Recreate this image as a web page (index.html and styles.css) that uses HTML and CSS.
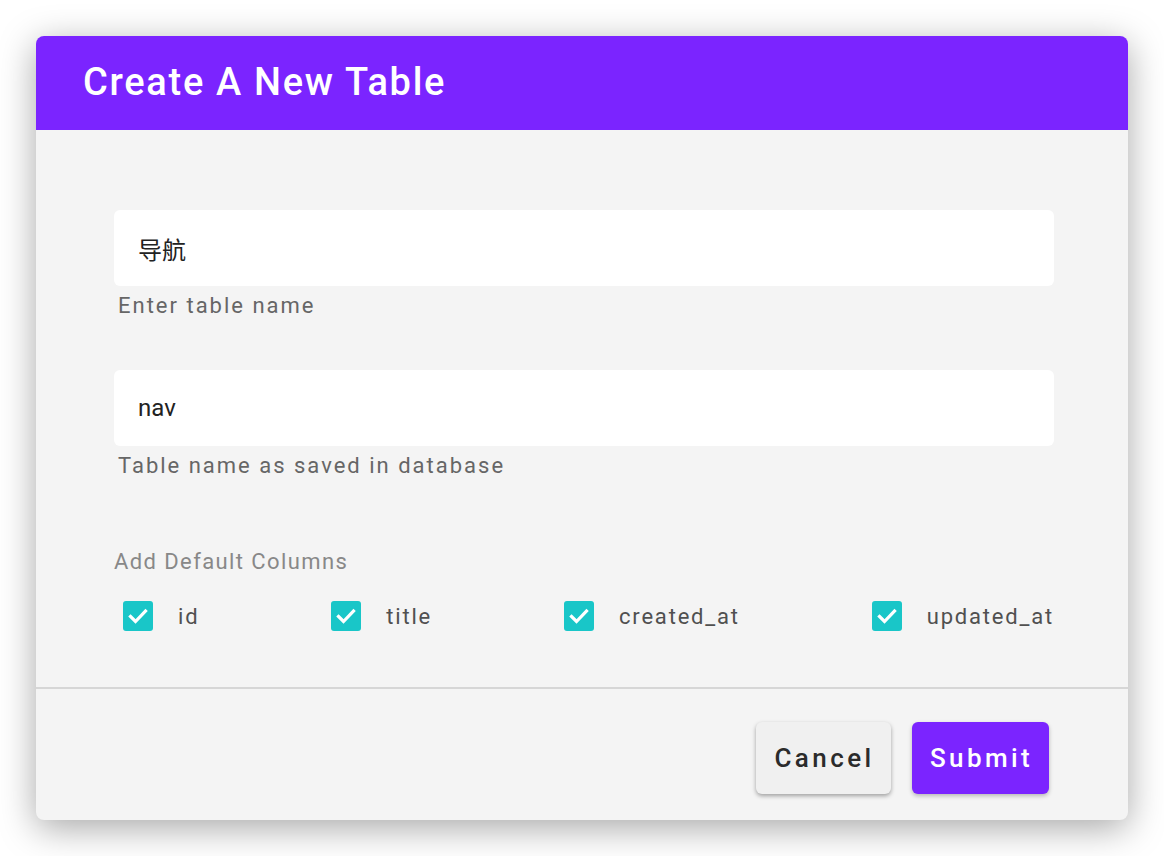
FILE: index.html
```html
<!DOCTYPE html>
<html lang="en">
<head>
<meta charset="utf-8">
<title>Create A New Table</title>
<link rel="stylesheet" href="styles.css">
</head>
<body>
<div class="dialog">
  <div class="dialog-header">
    <h1 class="dialog-title">Create A New Table</h1>
  </div>
  <div class="dialog-body">
    <div class="field">
      <div class="input">导航</div>
      <div class="helper">Enter table name</div>
    </div>
    <div class="field field-second">
      <div class="input">nav</div>
      <div class="helper">Table name as saved in database</div>
    </div>
    <div class="columns">
      <div class="columns-label">Add Default Columns</div>
      <div class="columns-row">
        <label class="check-item">
          <span class="checkbox"><svg viewBox="0 0 30 30" width="30" height="30"><path d="M7.5 15.5 L12.5 20.5 L22.5 10" fill="none" stroke="#fff" stroke-width="3.2" stroke-linecap="square"/></svg></span>
          <span class="check-label">id</span>
        </label>
        <label class="check-item">
          <span class="checkbox"><svg viewBox="0 0 30 30" width="30" height="30"><path d="M7.5 15.5 L12.5 20.5 L22.5 10" fill="none" stroke="#fff" stroke-width="3.2" stroke-linecap="square"/></svg></span>
          <span class="check-label">title</span>
        </label>
        <label class="check-item">
          <span class="checkbox"><svg viewBox="0 0 30 30" width="30" height="30"><path d="M7.5 15.5 L12.5 20.5 L22.5 10" fill="none" stroke="#fff" stroke-width="3.2" stroke-linecap="square"/></svg></span>
          <span class="check-label">created_at</span>
        </label>
        <label class="check-item">
          <span class="checkbox"><svg viewBox="0 0 30 30" width="30" height="30"><path d="M7.5 15.5 L12.5 20.5 L22.5 10" fill="none" stroke="#fff" stroke-width="3.2" stroke-linecap="square"/></svg></span>
          <span class="check-label">updated_at</span>
        </label>
      </div>
    </div>
  </div>
  <div class="dialog-footer">
    <button class="btn btn-cancel">Cancel</button>
    <button class="btn btn-submit">Submit</button>
  </div>
</div>
</body>
</html>
```
FILE: styles.css
```css
html, body {
  margin: 0;
  padding: 0;
  background: #ffffff;
}
body {
  font-family: Roboto, "Noto Sans CJK SC", sans-serif;
  padding: 36px;
}
.dialog {
  width: 1092px;
  height: 784px;
  background: #f4f4f4;
  border-radius: 8px;
  box-shadow: 0 8px 36px rgba(0, 0, 0, 0.35);
  overflow: hidden;
  display: flex;
  flex-direction: column;
}
.dialog-header {
  height: 94px;
  background: #7b24ff;
  display: flex;
  align-items: center;
  padding-left: 47px;
}
.dialog-title {
  margin: 0;
  color: #ffffff;
  font-size: 38px;
  font-weight: 500;
  letter-spacing: 1.7px;
  line-height: 1;
  padding-bottom: 3px;
}
.dialog-body {
  padding: 80px 74px 0 78px;
  flex: 1;
  border-bottom: 2px solid #d6d6d6;
}
.input {
  height: 76px;
  background: #ffffff;
  border-radius: 6px;
  box-sizing: border-box;
  padding-left: 24px;
  display: flex;
  align-items: center;
  font-size: 24px;
  color: #222222;
}
.helper {
  margin-top: 6px;
  padding-left: 4px;
  font-size: 22px;
  line-height: 28px;
  letter-spacing: 2px;
  color: #666666;
}
.field-second {
  margin-top: 50px;
}
.columns {
  margin-top: 68px;
}
.columns-label {
  font-size: 22px;
  line-height: 28px;
  letter-spacing: 1.4px;
  color: #888888;
}
.columns-row {
  margin-top: 24px;
  display: flex;
  justify-content: space-between;
  align-items: center;
}
.check-item {
  display: flex;
  align-items: center;
  gap: 25px;
  padding-left: 9px;
}
.checkbox {
  width: 30px;
  height: 30px;
  border-radius: 3px;
  background: #19c6c8;
  display: block;
}
.checkbox svg {
  display: block;
}
.check-label {
  font-size: 22px;
  line-height: 30px;
  letter-spacing: 1.8px;
  color: #505050;
  padding-top: 2px;
}
.dialog-footer {
  height: 131px;
  box-sizing: border-box;
  padding: 33px 79px 0 0;
  display: flex;
  justify-content: flex-end;
  align-items: flex-start;
  gap: 21px;
}
.btn {
  height: 72px;
  border: none;
  border-radius: 6px;
  font-family: Roboto, sans-serif;
  font-size: 26px;
  font-weight: 500;
  letter-spacing: 3.4px;
  cursor: pointer;
  padding: 0 0 0 2px;
}
.btn-cancel {
  width: 135px;
  background: #f0f0f0;
  color: #2b2b2b;
  box-shadow: 0 2px 4px rgba(0, 0, 0, 0.35);
}
.btn-submit {
  width: 137px;
  background: #7b24ff;
  color: #ffffff;
  box-shadow: 0 2px 4px rgba(0, 0, 0, 0.25);
}
```
